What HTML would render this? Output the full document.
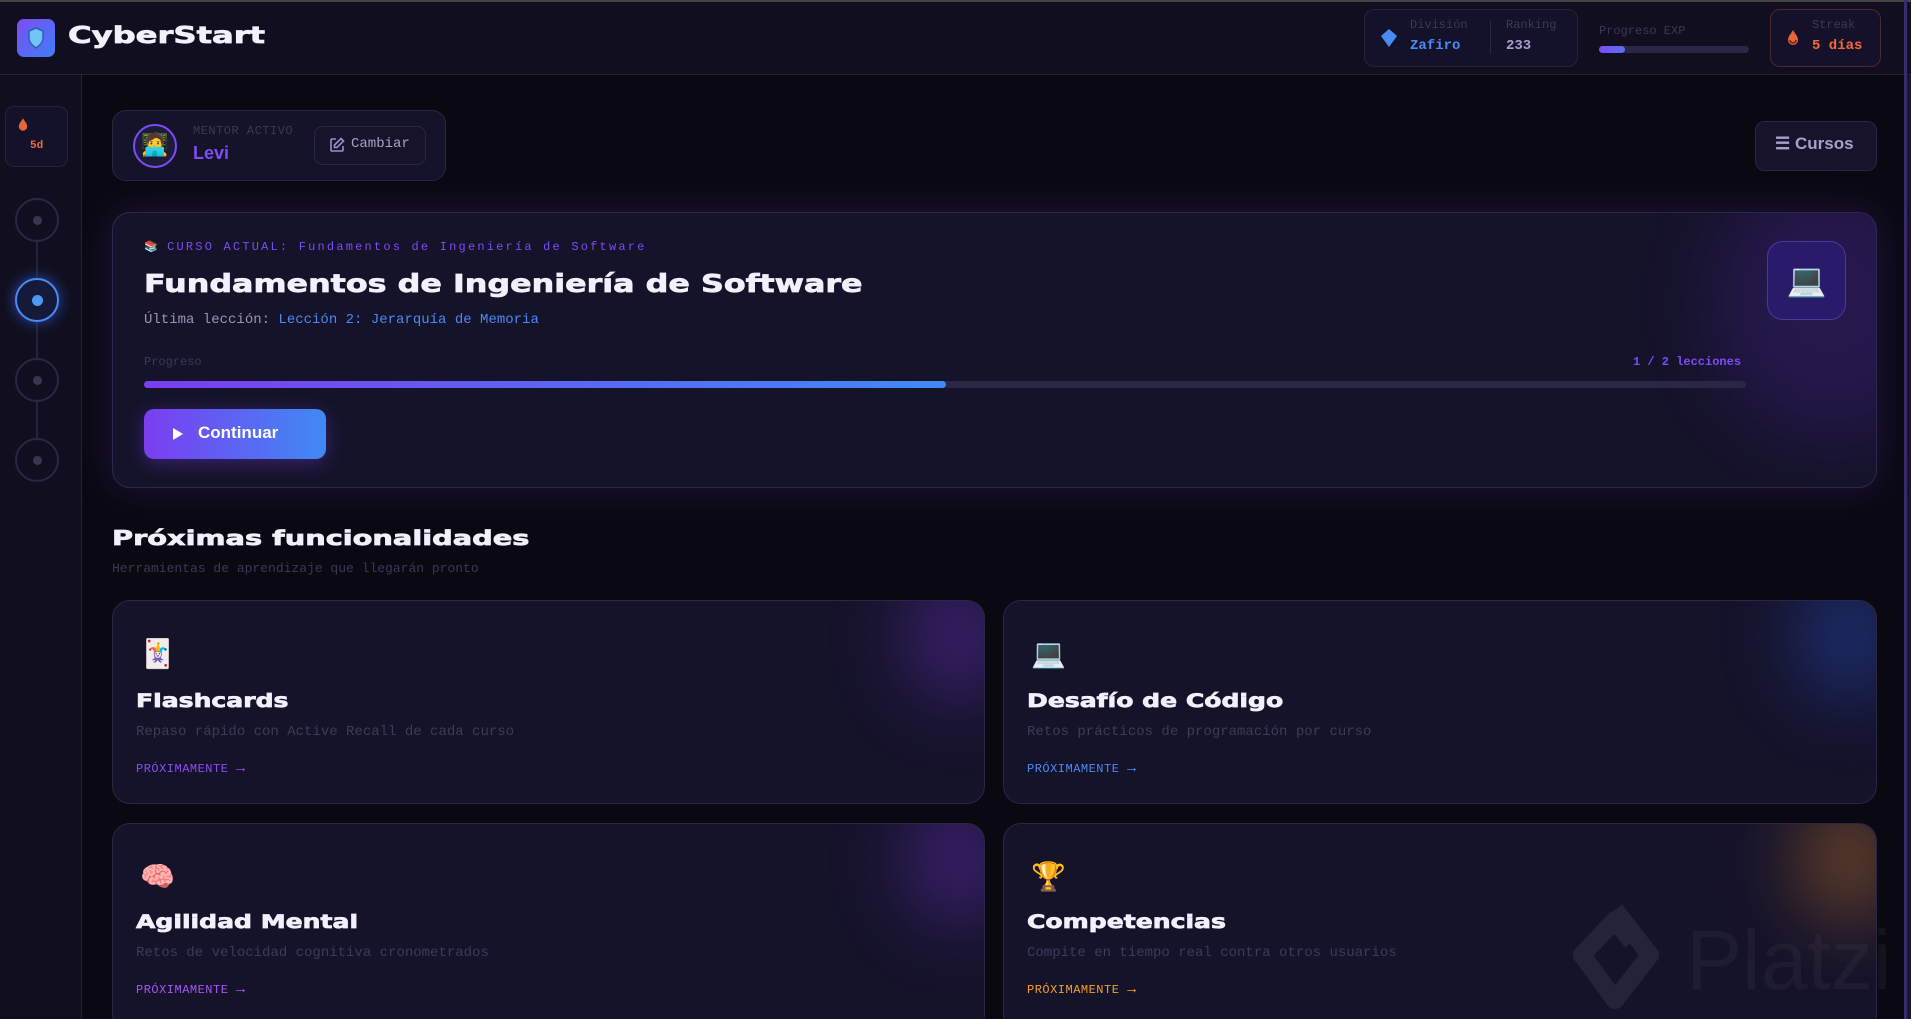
<!DOCTYPE html>
<html style="overflow:hidden"><head><meta charset="utf-8"><style>
*{box-sizing:border-box;margin:0;padding:0}
html,body{width:1911px;height:1019px;overflow:hidden}
body{background:#0a0912;font-family:"Liberation Mono","DejaVu Sans Mono",monospace;color:#ddd;position:relative}
.a{position:absolute}
.hd{font-family:"DejaVu Sans","Liberation Sans",sans-serif;font-weight:bold;color:#f2f0fa;-webkit-text-stroke:0.7px #f2f0fa;transform-origin:left top;white-space:nowrap}
.card{position:absolute;background:#15132a;border:1px solid #2a2645;border-radius:18px;overflow:hidden}
.glow{position:absolute;border-radius:50%;filter:blur(35px)}
.ct{position:absolute;left:23px;font-size:19px;transform:scaleX(1.32)}
.cd{position:absolute;left:23px;font-size:14px;color:#3e3a5a}
.cp{position:absolute;left:23px;font-size:12px;letter-spacing:0.5px}
.em{position:absolute;left:27px;top:36px;font-size:28px;font-family:"Noto Color Emoji","DejaVu Sans",sans-serif}
.dot{position:absolute;left:15px;width:44px;height:44px;border-radius:50%;border:2px solid #2a2745;background:#110f1f}
.dot i{position:absolute;left:16px;top:16px;width:9px;height:9px;border-radius:50%;background:#3a3557}
</style></head><body>
<div class="a" style="left:0;top:0;width:1911px;height:2px;background:#444"></div>
<div class="a" style="left:0;top:2px;width:1911px;height:73px;background:#110f1f;border-bottom:1px solid #25223a"></div>
<div class="a" style="left:17px;top:19px;width:38px;height:38px;border-radius:7px;background:linear-gradient(135deg,#7b4df5,#3f7ef5)"></div>
<svg class="a" style="left:27px;top:27px" width="18" height="22" viewBox="0 0 18 22"><path d="M9 1 L16 4 V11 C16 16 12 19 9 21 C6 19 2 16 2 11 V4Z" fill="#6fc6f2" stroke="#2b5fb8" stroke-width="1.5"/></svg>
<div class="a hd" style="left:68px;top:23px;font-size:23px;transform:scaleX(1.4)">CyberStart</div>

<div class="a" style="left:1364px;top:9px;width:214px;height:58px;border:1px solid #25223a;border-radius:10px;background:#14122a"></div>
<svg class="a" style="left:1380px;top:28px" width="18" height="20" viewBox="0 0 18 20"><path d="M9 1 L17 8 L9 19 L1 8Z" fill="#4a8af5"/></svg>
<div class="a" style="left:1410px;top:18px;font-size:12px;color:#3c3858">División</div>
<div class="a" style="left:1410px;top:38px;font-size:14px;font-weight:bold;color:#4a8af5">Zafiro</div>
<div class="a" style="left:1490px;top:20px;width:1px;height:34px;background:#2a2645"></div>
<div class="a" style="left:1506px;top:18px;font-size:12px;color:#3c3858">Ranking</div>
<div class="a" style="left:1506px;top:38px;font-size:14px;font-weight:bold;color:#a8a0cc">233</div>
<div class="a" style="left:1599px;top:24px;font-size:12px;color:#3c3858">Progreso EXP</div>
<div class="a" style="left:1599px;top:46px;width:150px;height:7px;border-radius:4px;background:#2a2645"></div>
<div class="a" style="left:1599px;top:46px;width:26px;height:7px;border-radius:4px;background:linear-gradient(90deg,#7b4df5,#5b6ef5)"></div>
<div class="a" style="left:1770px;top:9px;width:111px;height:58px;border:1px solid #4a2a30;border-radius:10px;background:#16112a"></div>
<svg class="a" style="left:1787px;top:29px" width="12" height="17" viewBox="0 0 12 17"><path d="M6 1 C8 5 11 7 11 11 A5 5 0 0 1 1 11 C1 7 4 5 6 1Z" fill="#e8643a"/><path d="M3 11 A3 3 0 0 0 9 11" stroke="#5a2418" stroke-width="1.5" fill="none"/></svg>
<div class="a" style="left:1812px;top:18px;font-size:12px;color:#3c3858">Streak</div>
<div class="a" style="left:1812px;top:38px;font-size:14px;font-weight:bold;color:#f56a3c">5 días</div>
<div class="a" style="left:1904px;top:75px;width:7px;height:944px;background:#1a1530"></div>
<div class="a" style="left:1904px;top:0;width:3px;height:1019px;background:#3a2a70"></div>

<div class="a" style="left:0;top:75px;width:82px;height:944px;background:#110f1f;border-right:1px solid #25223a"></div>
<div class="a" style="left:5px;top:106px;width:63px;height:61px;border:1px solid #25223a;border-radius:9px;background:#14122a"></div>
<svg class="a" style="left:18px;top:117px" width="10" height="15" viewBox="0 0 12 17"><path d="M6 1 C8 5 11 7 11 11 A5 5 0 0 1 1 11 C1 7 4 5 6 1Z" fill="#e8643a"/></svg>
<div class="a" style="left:30px;top:140px;font-size:11px;font-weight:bold;color:#f56a3c">5d</div>
<div class="a" style="left:36px;top:241px;width:2px;height:198px;background:#25223a"></div>
<div class="dot" style="top:198px"><i></i></div>
<div class="dot" style="top:278px;border-color:#4a8af5;background:#141a38;box-shadow:0 0 14px #2a4ab0"><i style="background:#4a9af5;left:15px;top:15px;width:11px;height:11px"></i></div>
<div class="dot" style="top:358px"><i></i></div>
<div class="dot" style="top:438px"><i></i></div>

<div class="card" style="left:112px;top:110px;width:334px;height:71px;border-radius:14px"></div>
<div class="a" style="left:133px;top:124px;width:44px;height:44px;border-radius:50%;border:2px solid #7b4df5;background:#1e1a3a;text-align:center;font-size:22px;line-height:40px;font-family:'Noto Color Emoji',sans-serif">🧑‍💻</div>
<div class="a" style="left:193px;top:124px;font-size:12px;color:#3c3858;letter-spacing:0.5px">MENTOR ACTIVO</div>
<div class="a" style="left:193px;top:143px;font-family:'Liberation Sans',sans-serif;font-size:18px;font-weight:bold;color:#7b4df5">Levi</div>
<div class="a" style="left:314px;top:126px;width:112px;height:39px;border:1px solid #2a2645;border-radius:9px;background:#16132b"></div>
<svg class="a" style="left:329px;top:137px" width="16" height="16" viewBox="0 0 16 16" fill="none" stroke="#9a90cc" stroke-width="1.6"><path d="M7 2H3a1 1 0 0 0-1 1v10a1 1 0 0 0 1 1h10a1 1 0 0 0 1-1V9"/><path d="M12 1.5l2.5 2.5L8 10.5H5.5V8z"/></svg>
<div class="a" style="left:351px;top:136px;font-size:14px;color:#a8a0cc">Cambiar</div>

<div class="a" style="left:1755px;top:121px;width:122px;height:50px;border:1px solid #2a2645;border-radius:10px;background:#16132b"></div>
<div class="a" style="left:1775px;top:134px;font-family:'Liberation Sans',sans-serif;font-size:17px;font-weight:bold;color:#a8a0cc">☰ Cursos</div>

<div class="card" style="left:112px;top:212px;width:1765px;height:276px;box-shadow:0 0 40px rgba(110,60,220,0.22);border-color:#2e2850">
 <div class="glow" style="left:1600px;top:-40px;width:240px;height:260px;background:rgba(100,40,200,0.22)"></div>
 <div class="a" style="left:1654px;top:28px;width:79px;height:79px;border-radius:16px;border:1px solid #4a37a0;background:#2a1a6a;text-align:center;line-height:77px;font-size:32px;font-family:'Noto Color Emoji',sans-serif">💻</div>
 <div class="a" style="left:31px;top:27px;font-size:12px;color:#7b4df5;letter-spacing:2.2px"><span style="font-family:'Noto Color Emoji',sans-serif;font-size:11px;letter-spacing:0">📚</span> CURSO ACTUAL: Fundamentos de Ingeniería de Software</div>
 <div class="a hd" style="left:31px;top:56px;font-size:25px;transform:scaleX(1.27)">Fundamentos de Ingeniería de Software</div>
 <div class="a" style="left:31px;top:99px;font-size:14px;color:#9a94b8">Última lección: <span style="color:#4a8af5">Lección 2: Jerarquía de Memoria</span></div>
 <div class="a" style="left:31px;top:142px;font-size:12px;color:#3c3858">Progreso</div>
 <div class="a" style="left:1520px;top:142px;font-size:12px;font-weight:bold;color:#7b4df5">1 / 2 lecciones</div>
 <div class="a" style="left:31px;top:168px;width:1602px;height:7px;border-radius:4px;background:#2a2645"></div>
 <div class="a" style="left:31px;top:168px;width:802px;height:7px;border-radius:4px;background:linear-gradient(90deg,#7b3df0,#3f8af5)"></div>
 <div class="a" style="left:31px;top:196px;width:182px;height:50px;border-radius:10px;background:linear-gradient(90deg,#7b3df0,#3f8af5);box-shadow:0 4px 18px rgba(110,60,220,0.4)"></div>
 <svg class="a" style="left:60px;top:215px" width="10" height="12" viewBox="0 0 10 12"><path d="M0 0L10 6L0 12Z" fill="#fff"/></svg>
 <div class="a" style="left:85px;top:210px;font-family:'Liberation Sans',sans-serif;font-size:17px;font-weight:bold;color:#fff">Continuar</div>
</div>

<div class="a hd" style="left:112px;top:526px;font-size:20px;transform:scaleX(1.44)">Próximas funcionalidades</div>
<div class="a" style="left:112px;top:561px;font-size:13px;color:#3c3858">Herramientas de aprendizaje que llegarán pronto</div>

<div class="card" style="left:112px;top:600px;width:873px;height:204px">
 <div class="glow" style="left:790px;top:-30px;width:110px;height:130px;background:rgba(110,50,200,0.4)"></div>
 <div class="em">🃏</div>
 <div class="ct hd" style="top:89px">Flashcards</div>
 <div class="cd" style="top:123px">Repaso rápido con Active Recall de cada curso</div>
 <div class="cp" style="top:159px;color:#8a4df5">PRÓXIMAMENTE <b style="font-size:15px">→</b></div>
</div>
<div class="card" style="left:1003px;top:600px;width:874px;height:204px">
 <div class="glow" style="left:790px;top:-30px;width:110px;height:130px;background:rgba(40,80,200,0.4)"></div>
 <div class="em">💻</div>
 <div class="ct hd" style="top:89px">Desafío de Código</div>
 <div class="cd" style="top:123px">Retos prácticos de programación por curso</div>
 <div class="cp" style="top:159px;color:#4a8af5">PRÓXIMAMENTE <b style="font-size:15px">→</b></div>
</div>
<div class="card" style="left:112px;top:823px;width:873px;height:210px">
 <div class="glow" style="left:790px;top:-30px;width:110px;height:130px;background:rgba(110,50,200,0.4)"></div>
 <div class="em">🧠</div>
 <div class="ct hd" style="top:87px">Agilidad Mental</div>
 <div class="cd" style="top:121px">Retos de velocidad cognitiva cronometrados</div>
 <div class="cp" style="top:157px;color:#a855f7">PRÓXIMAMENTE <b style="font-size:15px">→</b></div>
</div>
<div class="card" style="left:1003px;top:823px;width:874px;height:210px">
 <div class="glow" style="left:790px;top:-30px;width:110px;height:130px;background:rgba(200,120,40,0.4)"></div>
 <div class="em">🏆</div>
 <div class="ct hd" style="top:87px">Competencias</div>
 <div class="cd" style="top:121px">Compite en tiempo real contra otros usuarios</div>
 <div class="cp" style="top:157px;color:#f59e2a">PRÓXIMAMENTE <b style="font-size:15px">→</b></div>
</div>
<svg class="a" style="left:1570px;top:900px" width="100" height="110" viewBox="0 0 100 110"><path d="M45 10 L80 55 L45 100 L12 55 L45 20 L62 42" fill="none" stroke="rgba(80,80,90,0.28)" stroke-width="18" stroke-linejoin="round"/></svg>
<div class="a" style="left:1686px;top:912px;font-family:'Liberation Sans',sans-serif;font-size:84px;color:rgba(70,70,85,0.18)">Platzi</div>
</body></html>
